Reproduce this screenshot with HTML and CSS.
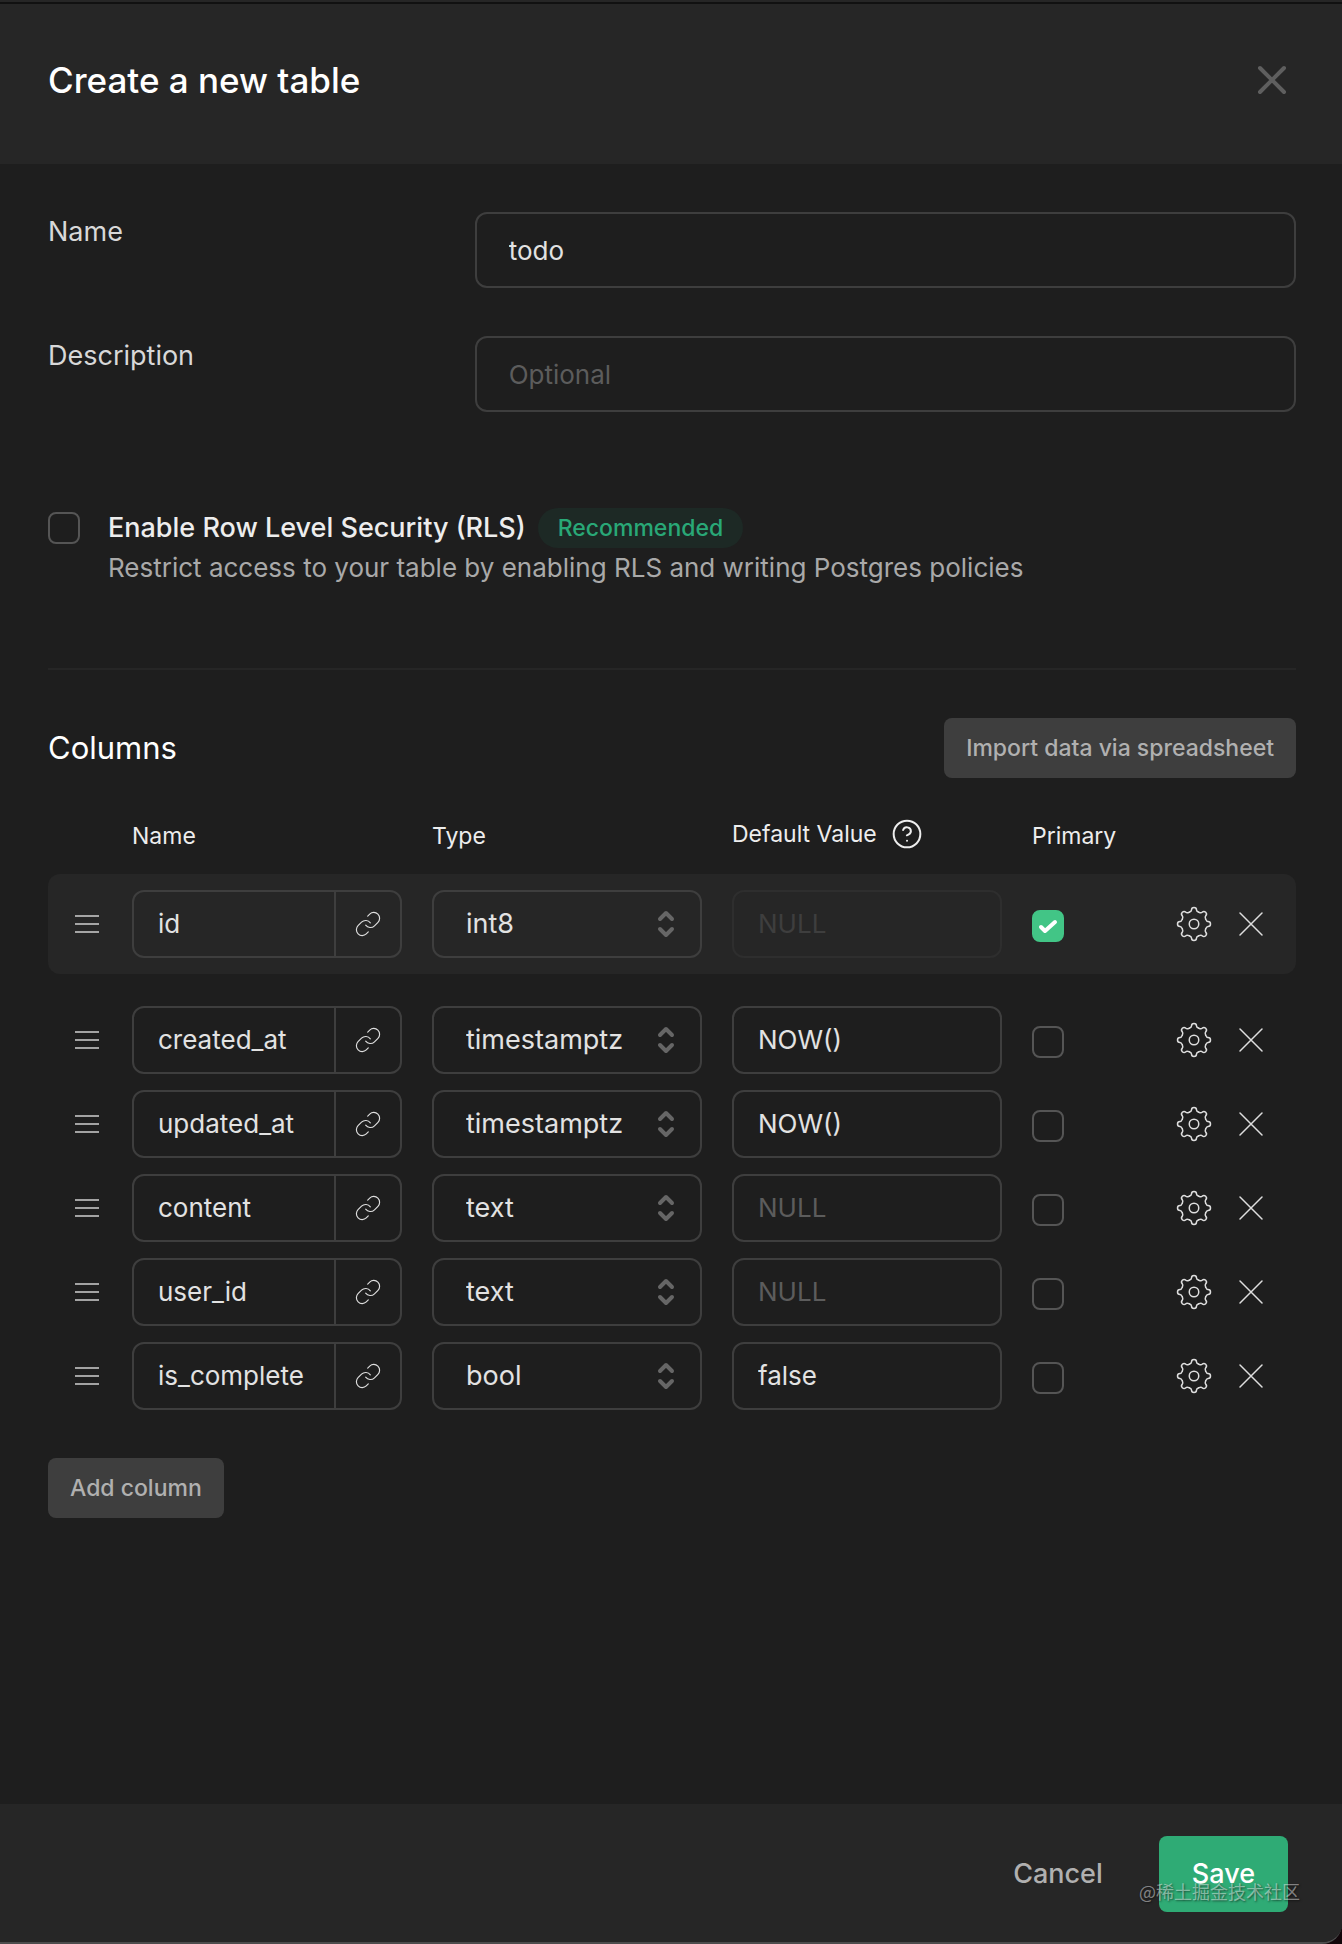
FILE: index.html
```html
<!DOCTYPE html>
<html lang="en">
<head>
<meta charset="utf-8">
<meta name="viewport" content="width=device-width, initial-scale=1">
<title>Create a new table</title>
<link rel="stylesheet" href="styles.css">
</head>
<body>
<svg class="sprite" aria-hidden="true">
  <defs>
    <path id="tooth" d="M-4.8-11.7C-3.4-12.3-2.5-12.8-2.5-14a2.5 2.5 0 0 1 5 0C2.5-12.8 3.4-12.3 4.8-11.7"/>
  </defs>
  <symbol id="menu" viewBox="0 0 24 24"><path d="M3 6h18M3 12h18M3 18h18"/></symbol>
  <symbol id="link" viewBox="0 0 24 24"><path d="M10 13a5 5 0 0 0 7.54.54l3-3a5 5 0 0 0-7.07-7.07l-1.72 1.71"/><path d="M14 11a5 5 0 0 0-7.54-.54l-3 3a5 5 0 0 0 7.07 7.07l1.71-1.71"/></symbol>
  <symbol id="gear" viewBox="-18 -18 36 36">
    <circle r="4.75"/>
    <use href="#tooth"/>
    <use href="#tooth" transform="rotate(45)"/>
    <use href="#tooth" transform="rotate(90)"/>
    <use href="#tooth" transform="rotate(135)"/>
    <use href="#tooth" transform="rotate(180)"/>
    <use href="#tooth" transform="rotate(225)"/>
    <use href="#tooth" transform="rotate(270)"/>
    <use href="#tooth" transform="rotate(315)"/>
  </symbol>
  <symbol id="cross" viewBox="0 0 26 26"><path d="M2 2l22 22M24 2L2 24"/></symbol>
  <symbol id="updown" viewBox="0 0 20 32"><path d="M4 11l6-6 6 6M4 21l6 6 6-6"/></symbol>
</svg>
<form class="sheet">
  <header class="sheet-header">
    <h1 class="sheet-title">Create a new table</h1>
    <button type="button" class="icon-button close" aria-label="Close">
      <svg class="icon-close" viewBox="0 0 32 32"><path d="M4 4l24 24M28 4L4 28"/></svg>
    </button>
  </header>
  <main class="sheet-body">
    <div class="field">
      <label class="field-label" for="table-name">Name</label>
      <input class="field-input" id="table-name" type="text" value="todo">
    </div>
    <div class="field">
      <label class="field-label" for="table-description">Description</label>
      <input class="field-input" id="table-description" type="text" placeholder="Optional">
    </div>
    <div class="security">
      <input class="checkbox" id="rls" type="checkbox">
      <div class="security-text">
        <div class="security-heading">
          <label class="security-label" for="rls">Enable Row Level Security (RLS)</label>
          <span class="badge">Recommended</span>
        </div>
        <p class="security-note">Restrict access to your table by enabling RLS and writing Postgres policies</p>
      </div>
    </div>
    <section class="columns">
      <div class="columns-header">
        <h2 class="columns-title">Columns</h2>
        <button type="button" class="button button-default">Import data via spreadsheet</button>
      </div>
      <table class="grid">
        <thead>
          <tr class="grid-row grid-head">
            <td></td>
            <th scope="col">Name</th>
            <th scope="col">Type</th>
            <th scope="col" class="with-help">Default Value
              <svg class="icon-help" viewBox="0 0 24 24"><circle cx="12" cy="12" r="10"/><path d="M9.09 9a3 3 0 0 1 5.83 1c0 2-3 3-3 3M12 17h.01"/></svg>
            </th>
            <th scope="col">Primary</th>
            <td></td>
          </tr>
        </thead>
        <tbody>
          <tr class="grid-row primary">
            <td class="drag"><svg class="icon-menu"><use href="#menu"/></svg></td>
            <td class="name"><input class="cell-input" type="text" aria-label="Column name" value="id"><button type="button" class="icon-button link" aria-label="Add foreign key"><svg class="icon-link"><use href="#link"/></svg></button></td>
            <td class="type"><select class="cell-select" aria-label="Type"><option>int8</option></select><svg class="icon-updown"><use href="#updown"/></svg></td>
            <td class="default"><input class="cell-input" type="text" aria-label="Default value" placeholder="NULL" disabled></td>
            <td class="key"><input class="checkbox" type="checkbox" aria-label="Primary" checked></td>
            <td class="actions"><button type="button" class="icon-button" aria-label="Settings"><svg class="icon-gear"><use href="#gear"/></svg></button><button type="button" class="icon-button" aria-label="Remove"><svg class="icon-cross"><use href="#cross"/></svg></button></td>
          </tr>
          <tr class="grid-row">
            <td class="drag"><svg class="icon-menu"><use href="#menu"/></svg></td>
            <td class="name"><input class="cell-input" type="text" aria-label="Column name" value="created_at"><button type="button" class="icon-button link" aria-label="Add foreign key"><svg class="icon-link"><use href="#link"/></svg></button></td>
            <td class="type"><select class="cell-select" aria-label="Type"><option>timestamptz</option></select><svg class="icon-updown"><use href="#updown"/></svg></td>
            <td class="default"><input class="cell-input" type="text" aria-label="Default value" placeholder="NULL" value="NOW()"></td>
            <td class="key"><input class="checkbox" type="checkbox" aria-label="Primary"></td>
            <td class="actions"><button type="button" class="icon-button" aria-label="Settings"><svg class="icon-gear"><use href="#gear"/></svg></button><button type="button" class="icon-button" aria-label="Remove"><svg class="icon-cross"><use href="#cross"/></svg></button></td>
          </tr>
          <tr class="grid-row">
            <td class="drag"><svg class="icon-menu"><use href="#menu"/></svg></td>
            <td class="name"><input class="cell-input" type="text" aria-label="Column name" value="updated_at"><button type="button" class="icon-button link" aria-label="Add foreign key"><svg class="icon-link"><use href="#link"/></svg></button></td>
            <td class="type"><select class="cell-select" aria-label="Type"><option>timestamptz</option></select><svg class="icon-updown"><use href="#updown"/></svg></td>
            <td class="default"><input class="cell-input" type="text" aria-label="Default value" placeholder="NULL" value="NOW()"></td>
            <td class="key"><input class="checkbox" type="checkbox" aria-label="Primary"></td>
            <td class="actions"><button type="button" class="icon-button" aria-label="Settings"><svg class="icon-gear"><use href="#gear"/></svg></button><button type="button" class="icon-button" aria-label="Remove"><svg class="icon-cross"><use href="#cross"/></svg></button></td>
          </tr>
          <tr class="grid-row">
            <td class="drag"><svg class="icon-menu"><use href="#menu"/></svg></td>
            <td class="name"><input class="cell-input" type="text" aria-label="Column name" value="content"><button type="button" class="icon-button link" aria-label="Add foreign key"><svg class="icon-link"><use href="#link"/></svg></button></td>
            <td class="type"><select class="cell-select" aria-label="Type"><option>text</option></select><svg class="icon-updown"><use href="#updown"/></svg></td>
            <td class="default"><input class="cell-input" type="text" aria-label="Default value" placeholder="NULL"></td>
            <td class="key"><input class="checkbox" type="checkbox" aria-label="Primary"></td>
            <td class="actions"><button type="button" class="icon-button" aria-label="Settings"><svg class="icon-gear"><use href="#gear"/></svg></button><button type="button" class="icon-button" aria-label="Remove"><svg class="icon-cross"><use href="#cross"/></svg></button></td>
          </tr>
          <tr class="grid-row">
            <td class="drag"><svg class="icon-menu"><use href="#menu"/></svg></td>
            <td class="name"><input class="cell-input" type="text" aria-label="Column name" value="user_id"><button type="button" class="icon-button link" aria-label="Add foreign key"><svg class="icon-link"><use href="#link"/></svg></button></td>
            <td class="type"><select class="cell-select" aria-label="Type"><option>text</option></select><svg class="icon-updown"><use href="#updown"/></svg></td>
            <td class="default"><input class="cell-input" type="text" aria-label="Default value" placeholder="NULL"></td>
            <td class="key"><input class="checkbox" type="checkbox" aria-label="Primary"></td>
            <td class="actions"><button type="button" class="icon-button" aria-label="Settings"><svg class="icon-gear"><use href="#gear"/></svg></button><button type="button" class="icon-button" aria-label="Remove"><svg class="icon-cross"><use href="#cross"/></svg></button></td>
          </tr>
          <tr class="grid-row">
            <td class="drag"><svg class="icon-menu"><use href="#menu"/></svg></td>
            <td class="name"><input class="cell-input" type="text" aria-label="Column name" value="is_complete"><button type="button" class="icon-button link" aria-label="Add foreign key"><svg class="icon-link"><use href="#link"/></svg></button></td>
            <td class="type"><select class="cell-select" aria-label="Type"><option>bool</option></select><svg class="icon-updown"><use href="#updown"/></svg></td>
            <td class="default"><input class="cell-input" type="text" aria-label="Default value" placeholder="NULL" value="false"></td>
            <td class="key"><input class="checkbox" type="checkbox" aria-label="Primary"></td>
            <td class="actions"><button type="button" class="icon-button" aria-label="Settings"><svg class="icon-gear"><use href="#gear"/></svg></button><button type="button" class="icon-button" aria-label="Remove"><svg class="icon-cross"><use href="#cross"/></svg></button></td>
          </tr>
        </tbody>
      </table>
      <button type="button" class="button button-default">Add column</button>
    </section>
  </main>
  <footer class="sheet-footer">
    <button type="button" class="button button-text">Cancel</button>
    <button type="submit" class="button button-primary">Save</button>
    <span class="watermark">@稀土掘金技术社区</span>
  </footer>
</form>
</body>
</html>
```
FILE: styles.css
```css
* { box-sizing: border-box; }

body {
  margin: 0;
  background: #12060a;
  color: #e2e2e2;
  font-family: Inter, "Liberation Sans", sans-serif;
  font-size: 26px;
  line-height: 40px;
}

h1, h2, p { margin: 0; }

input, select, button {
  margin: 0;
  font: inherit;
  color: inherit;
}

svg {
  display: block;
  fill: none;
  stroke: currentColor;
  stroke-width: 1;
  stroke-linecap: round;
  stroke-linejoin: round;
}

.sprite {
  position: absolute;
  width: 0;
  height: 0;
}

.sheet {
  display: flex;
  flex-direction: column;
  min-height: 100vh;
  overflow: hidden;
  background: #1e1e1e;
  border-bottom: 2px solid #4c4c4c;
  border-bottom-right-radius: 20px;
}

.sheet-header {
  display: flex;
  align-items: center;
  justify-content: space-between;
  height: 164px;
  padding: 0 54px 4px 48px;
  background: linear-gradient(#262626 2px, #111 2px, #111 4px, #262626 4px);
}

.sheet-title {
  font-size: 35px;
  font-weight: 500;
  color: #fff;
}

.icon-button {
  display: flex;
  align-items: center;
  justify-content: center;
  padding: 0;
  border: 0;
  background: none;
  color: #dedede;
  cursor: pointer;
}

.close { color: #5f5f5f; }

.icon-close {
  width: 32px;
  height: 32px;
  stroke-width: 4;
}

.sheet-body {
  flex: 1;
  padding: 48px 46px 48px 48px;
}

.field {
  display: grid;
  grid-template-columns: repeat(12, 1fr);
  gap: 32px;
  margin-bottom: 48px;
}

.field-label {
  grid-column: span 4;
  color: #d8d8d8;
  font-size: 27px;
}

.field-input {
  grid-column: span 8;
  width: 100%;
  height: 76px;
  padding: 0 32px;
  border: 2px solid #3e3e3e;
  border-radius: 12px;
  background: none;
}

::placeholder {
  color: #5c5c5c;
  opacity: 1;
}

.security {
  display: flex;
  gap: 28px;
  margin-top: 96px;
  padding-bottom: 80px;
  border-bottom: 2px solid #262626;
}

.checkbox {
  flex: none;
  appearance: none;
  display: block;
  width: 32px;
  height: 32px;
  border: 2px solid #555;
  border-radius: 8px;
  background: none;
}

.security .checkbox { margin-top: 4px; }

.checkbox:checked {
  border-color: #42c586;
  background: #42c586 url("data:image/svg+xml,%3Csvg xmlns='http://www.w3.org/2000/svg' viewBox='0 0 28 28'%3E%3Cpath d='M7 15l4 4 10-9' fill='none' stroke='white' stroke-width='4' stroke-linecap='round' stroke-linejoin='round'/%3E%3C/svg%3E") center / 28px 28px no-repeat;
}

.security-heading {
  display: flex;
  align-items: center;
  gap: 12px;
}

.security-label {
  color: #ededed;
  font-size: 27px;
  font-weight: 500;
}

.badge {
  padding: 0 20px;
  border-radius: 20px;
  background: #1d2925;
  color: #29a877;
  font-size: 23px;
  font-weight: 500;
}

.security-note { color: #a9a9a9; }

.columns-header {
  display: flex;
  align-items: center;
  justify-content: space-between;
  padding: 48px 0 36px;
}

.columns-title {
  font-size: 31px;
  font-weight: 400;
  color: #fff;
}

.button {
  padding: 0 22px;
  border: 0;
  border-radius: 8px;
  font-size: 27px;
  font-weight: 500;
  cursor: pointer;
}

.button-default {
  height: 60px;
  background: #3e3e3e;
  color: #b0b0b0;
  font-size: 23px;
}

.grid, .grid thead { display: block; }

.grid tbody {
  display: flex;
  flex-direction: column;
  gap: 16px;
  margin-bottom: 48px;
}

.grid td, .grid th { padding: 0; }

.grid-row {
  display: grid;
  grid-template-columns: 54px repeat(3, minmax(0, 1fr)) 84px 150px;
  column-gap: 30px;
  align-items: center;
}

.grid-head {
  height: 60px;
  padding-bottom: 16px;
}

.grid-head th {
  height: 40px;
  color: #ededed;
  font-size: 23px;
  font-weight: 400;
  text-align: left;
  white-space: nowrap;
}

.grid-head .with-help {
  display: flex;
  align-items: center;
  gap: 14px;
  padding-bottom: 4px;
}

.icon-help {
  width: 32px;
  height: 32px;
  stroke-width: 1.5;
}

.primary {
  margin-bottom: 16px;
  padding: 16px 0;
  border-radius: 12px;
  background: #262626;
}

.grid .drag {
  padding-left: 23px;
  color: #cfcfcf;
}

.icon-menu {
  width: 32px;
  height: 32px;
  stroke-linecap: butt;
}

.name, .type, .default {
  display: flex;
  min-width: 0;
  height: 68px;
  border: 2px solid #3e3e3e;
  border-radius: 12px;
}

.cell-input {
  flex: 1;
  width: 100%;
  min-width: 0;
  padding: 0 24px;
  border: 0;
  background: none;
}

.name .cell-input { padding-right: 0; }

.link {
  flex: none;
  width: 66px;
  border-left: 2px solid #3e3e3e;
}

.icon-link { width: 28px; height: 28px; }

.type { position: relative; }

.cell-select {
  appearance: none;
  flex: 1;
  min-width: 0;
  padding: 0 48px 0 32px;
  border: 0;
  background: none;
  font-size: 27px;
}

.icon-updown {
  position: absolute;
  top: 16px;
  right: 24px;
  width: 20px;
  height: 32px;
  color: #666;
  stroke-width: 4;
  pointer-events: none;
}

.primary .default { border-color: #2e2e2e; }

.primary .default ::placeholder { color: #3e3e3e; }

.grid .key { padding-top: 4px; }

.grid .actions {
  display: flex;
  justify-content: flex-end;
  gap: 26px;
  padding-right: 32px;
}

.icon-gear {
  width: 36px;
  height: 36px;
  stroke-width: 1.5;
}

.icon-cross {
  width: 26px;
  height: 26px;
  stroke-width: 1.5;
}

.sheet-footer {
  position: relative;
  display: flex;
  align-items: center;
  justify-content: flex-end;
  gap: 24px;
  height: 138px;
  padding: 2px 54px 0;
  background: #262626;
}

.button-text {
  height: 76px;
  padding: 0 32px;
  background: none;
  color: #b0b0b0;
}

.button-primary {
  height: 76px;
  padding: 0 33px;
  background: #2fab75;
  color: #fff;
}

.watermark {
  position: absolute;
  right: 42px;
  bottom: 36px;
  font-family: "Noto Sans CJK SC", sans-serif;
  font-size: 18px;
  line-height: 30px;
  color: rgba(255, 255, 255, 0.45);
  text-shadow: 1px 1px 2px rgba(0, 0, 0, 0.5);
  pointer-events: none;
}
```
